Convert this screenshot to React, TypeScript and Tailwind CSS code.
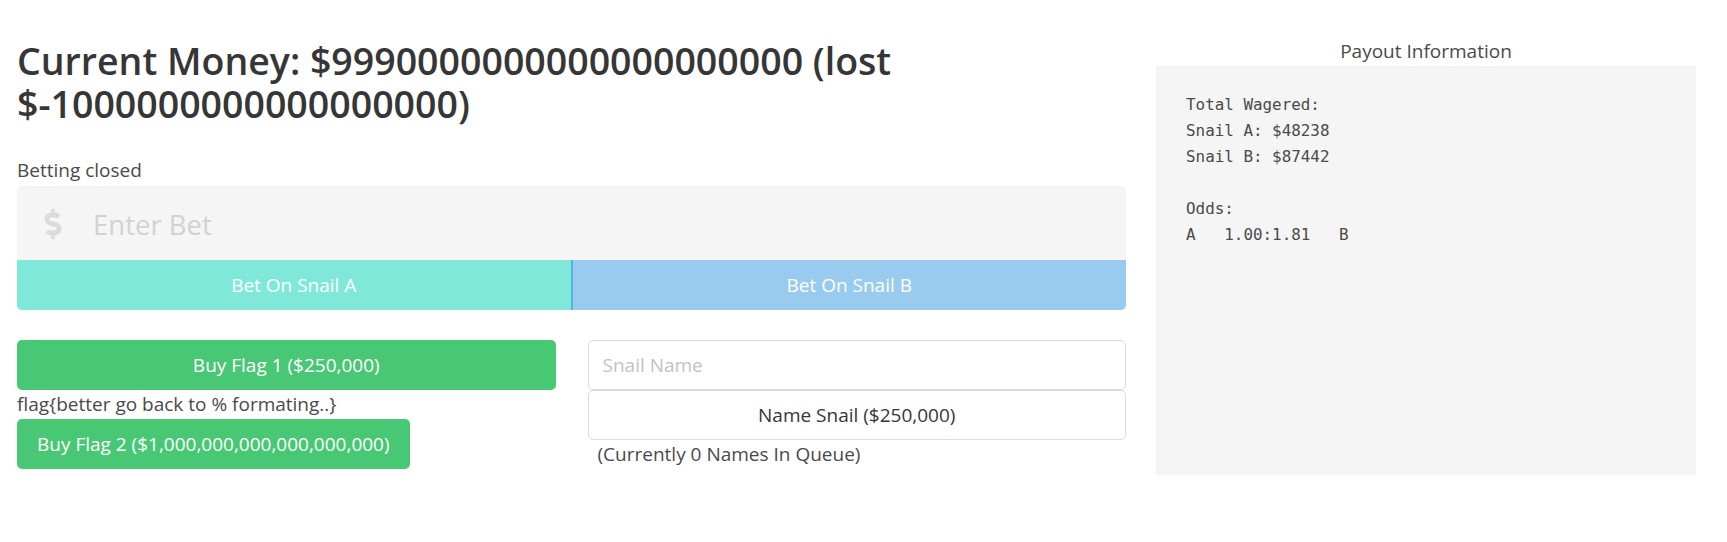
import { FaDollarSign } from "react-icons/fa";

const body = { fontFamily: '"Open Sans", "Noto Sans", sans-serif' };

const App = () => {
  return (
    <div style={body} className="flex w-full bg-white text-[19px] leading-[29px] text-[#4a4a4a]">
      {/* main column */}
      <div className="w-[1141px] pl-[17px] pr-[15px] pt-[39px]">
        <h1 className="text-[37.5px] font-semibold leading-[43px] text-[#363636]">
          Current Money: $9990000000000000000000 (lost $-1000000000000000000)
        </h1>

        <p className="mt-[31px] pb-[1px]">Betting closed</p>

        <div className="flex h-[74px] items-center rounded-t-[5px] bg-[#f5f5f5]">
          <span className="flex w-[72px] justify-center pt-[2px] text-[#dbdbdb]">
            <FaDollarSign className="h-[30px] w-[18px]" />
          </span>
          <input
            disabled
            placeholder="Enter Bet"
            className="h-full flex-1 bg-transparent pl-[4px] pt-[2px] text-[27.5px] outline-none placeholder:text-[#d2d2d2]"
          />
        </div>
        <div className="flex h-[50px] text-white">
          <button className="flex-1 rounded-bl-[5px] bg-[#80e8d9]">Bet On Snail A</button>
          <button className="flex-1 rounded-br-[5px] border-l-2 border-[#56b4e0] bg-[#98cbed]">
            Bet On Snail B
          </button>
        </div>

        <div className="mt-[30px] grid grid-cols-2 gap-[32px]">
          <div className="flex flex-col items-start">
            <button className="h-[50px] w-full rounded-[5px] bg-[#48c774] text-white">
              Buy Flag 1 ($250,000)
            </button>
            <p>flag{"{"}better go back to % formating..{"}"}</p>
            <button className="h-[50px] rounded-[5px] bg-[#48c774] px-[20px] text-white">
              Buy Flag 2 ($1,000,000,000,000,000,000)
            </button>
          </div>
          <div className="flex flex-col">
            <input
              placeholder="Snail Name"
              className="h-[50px] rounded-[5px] border border-[#dbdbdb] px-[14px] outline-none placeholder:text-[#c2c2c2]"
            />
            <button className="h-[50px] rounded-[5px] border border-[#dbdbdb] bg-white text-[#363636]">
              Name Snail ($250,000)
            </button>
            <p className="pl-[10px]">(Currently 0 Names In Queue)</p>
          </div>
        </div>
      </div>

      {/* payout column */}
      <div className="w-[570px] px-[15px] pt-[37px]">
        <p className="text-center">Payout Information</p>
        <pre
          style={{ fontFamily: '"DejaVu Sans Mono", "Liberation Mono", monospace' }}
          className="h-[409px] bg-[#f5f5f5] pl-[30px] pr-[26px] pt-[26px] text-[15.9px] leading-[26px] text-[#4a4a4a]"
        >
{`Total Wagered:
Snail A: $48238
Snail B: $87442

Odds:
A   1.00:1.81   B`}
        </pre>
      </div>
    </div>
  );
};

export default App;
